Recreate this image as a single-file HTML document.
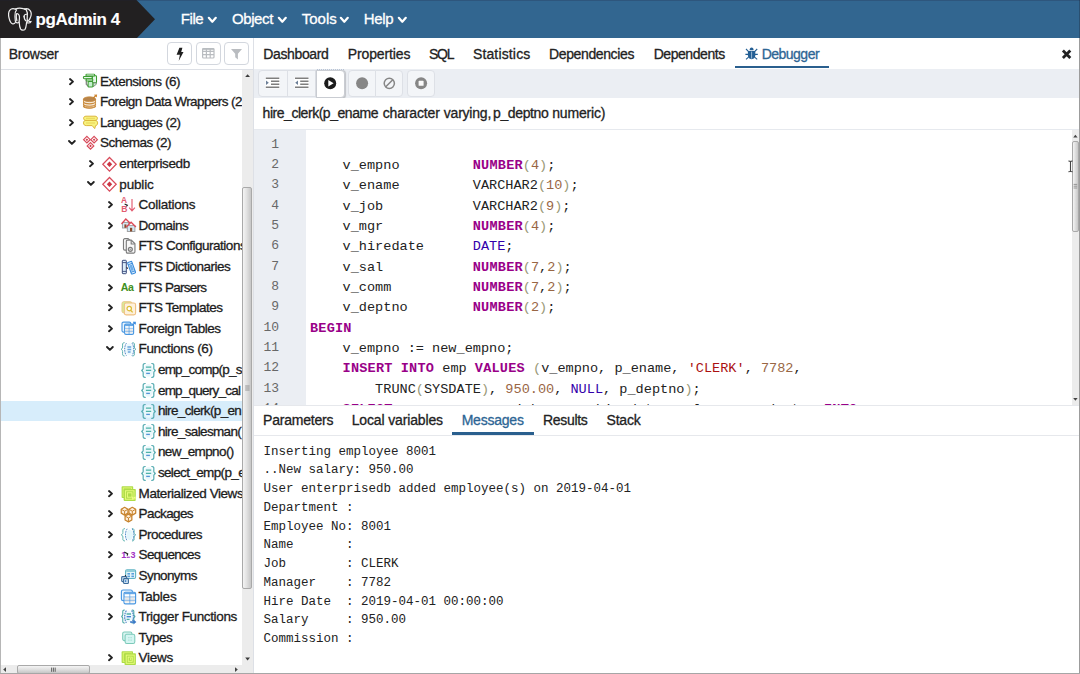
<!DOCTYPE html>
<html>
<head>
<meta charset="utf-8">
<title>pgAdmin 4</title>
<style>
*{box-sizing:border-box;margin:0;padding:0}
html,body{width:1080px;height:674px;overflow:hidden;background:#fff}
body{font-family:"Liberation Sans",sans-serif;font-size:14px;color:#222;position:relative}
.t{position:absolute;white-space:nowrap;-webkit-text-stroke:0.3px}
svg{position:absolute;overflow:visible}
#hdr{position:absolute;left:0;top:0;width:1080px;height:38.5px;background:#326690}
.menu{position:absolute;top:10px;color:#fff;font-size:14.5px;white-space:nowrap;line-height:18px}
#brw{position:absolute;left:0;top:38px;width:253px;height:636px;background:#fff;border-left:1px solid #b6b6b6;overflow:hidden}
#brwtitle{position:absolute;left:0;top:0;width:253px;height:32px;border-bottom:1px solid #dde0e6;background:#fff}
.bbtn{position:absolute;top:4.2px;height:22.8px;width:24.5px;border:1px solid #d3d7de;border-radius:4px;background:#fff}
#vline{position:absolute;left:253px;top:38px;width:1px;height:636px;background:#dde0e6}
#tabs{position:absolute;left:254px;top:38px;width:826px;height:31px;background:#fff}
.tab{position:absolute;top:8px;font-size:14px;line-height:16px;white-space:nowrap;color:#222}
#toolbar{position:absolute;left:254px;top:69px;width:826px;height:29.2px;background:#ebeef3}
.tbtn{position:absolute;top:1.2px;height:27px;border:1px solid #dde0e6;background:#f3f5f8}
#ftitle{position:absolute;left:254px;top:98.2px;width:826px;height:31.8px;background:#fff;border-bottom:1px solid #e6e9ee}
#editor{position:absolute;left:254px;top:130px;width:818px;height:274.5px;background:#fff;overflow:hidden}
#gutter{position:absolute;left:0;top:0;width:52px;height:275px;background:#ebeef3}
.ln{position:absolute;left:0;width:25px;text-align:right;font-family:"Liberation Mono",monospace;font-size:13px;line-height:20px;color:#686868;white-space:pre}
.cl{position:absolute;left:56px;font-family:"Liberation Mono",monospace;font-size:13.57px;line-height:20px;color:#222;white-space:pre}
.k{color:#908;font-weight:bold;letter-spacing:0.2px}.b{color:#30a}.n{color:#964}.s{color:#a11}.p{color:#997}
#btabs{position:absolute;left:254px;top:404.5px;width:826px;height:31.5px;background:#fff;border-top:1px solid #e6e8ec;border-bottom:1px solid #e6e8ec}
#msgs{position:absolute;left:254px;top:436px;width:826px;height:238px;background:#fff}
.ml{position:absolute;left:9.5px;font-family:"Liberation Mono",monospace;font-size:12.5px;line-height:18px;color:#222;white-space:pre}
.row{position:absolute;left:0;width:242px;height:20.6px}
.lbl{position:absolute;white-space:nowrap;font-size:13.5px;line-height:18px;color:#1c1c1c;-webkit-text-stroke:0.3px}

</style>
</head>
<body>
<div id="hdr">
<svg style="left:0;top:0" width="160" height="38.5" viewBox="0 0 160 38.5"><polygon points="0,0 136.5,0 155,19.2 136.5,38.5 0,38.5" fill="#222021"/></svg>
<svg style="left:7.5px;top:8.4px" width="23.6" height="22.8" viewBox="0 0 24 24" preserveAspectRatio="none" fill="none" stroke="#efefef" stroke-width="1.25" stroke-linecap="round" stroke-linejoin="round">
<path d="M7.6,1.2 C5.5,0.3 3.2,0.6 1.9,2.2 C0.2,4.3 0.4,7.6 1.1,10.6 C1.7,13.2 2.9,15.9 4.4,16.6 C5.6,17.1 6.8,16.4 7.5,15.3"/>
<path d="M8.7,1.9 C7.2,3.6 6.9,6 7.1,8.6 C7.3,11 7.2,13.4 7.7,14.6 C8.3,15.9 10.3,16 11.2,14.8"/>
<path d="M7.6,1.2 C9.5,0.2 13,0 15.6,0.7 C17,1 18,1.5 18.6,2"/>
<path d="M8.4,6.2 C9.6,5.4 11,6.3 11.5,8.2 C12,10.2 11.6,12.6 11.3,14.6 C11.5,17.5 12,20.6 12.9,22.2 C13.8,23.7 16.2,23.7 17.3,22.4 C18.4,21 18.5,17.8 18.9,15.5"/>
<path d="M8.6,6.4 C8.2,8.4 8.4,11.2 9,13.4"/>
<path d="M16.6,1.1 C18.7,0.4 21.2,0.9 22.5,2.7 C24.2,5 23.6,8.6 22.3,11.2 C21.8,12.2 21.3,13 20.8,13.6 C21.8,14.5 23,14.4 23.5,14.2 C22.8,15.6 20.6,16 18.9,15.4"/>
<path d="M18.6,2 C19.8,4.2 19.9,6.6 19.6,8.8 C19.4,10.6 19.4,12.4 19.9,13.8"/>
<path d="M16.1,9.3 C16.3,7.7 17.4,6.4 19,6.6"/>
<path d="M16.6,9 C16.4,11.4 17.8,13.6 19.6,14.2"/>
</svg>
<div class="t" style="left:35.6px;top:9.5px;font-size:17px;line-height:20px;color:#fff;font-weight:bold;letter-spacing:-0.393px;-webkit-text-stroke:0.1px">pgAdmin 4</div>
<div class="t" style="left:180.8px;top:10px;font-size:15px;line-height:18px;color:#fff;font-weight:normal;letter-spacing:-0.424px;">File</div><svg style="left:208.3px;top:17.2px" width="8.6" height="5.8" viewBox="0 0 8.6 5.8"><polyline points="0.8,0.8 4.3,4.8 7.8,0.8" fill="none" stroke="#fff" stroke-width="2.2" stroke-linecap="round" stroke-linejoin="round"/></svg>
<div class="t" style="left:231.9px;top:10px;font-size:15px;line-height:18px;color:#fff;font-weight:normal;letter-spacing:-0.372px;">Object</div><svg style="left:277.5px;top:17.2px" width="8.6" height="5.8" viewBox="0 0 8.6 5.8"><polyline points="0.8,0.8 4.3,4.8 7.8,0.8" fill="none" stroke="#fff" stroke-width="2.2" stroke-linecap="round" stroke-linejoin="round"/></svg>
<div class="t" style="left:301.7px;top:10px;font-size:15px;line-height:18px;color:#fff;font-weight:normal;letter-spacing:0.042px;">Tools</div><svg style="left:340.3px;top:17.2px" width="8.6" height="5.8" viewBox="0 0 8.6 5.8"><polyline points="0.8,0.8 4.3,4.8 7.8,0.8" fill="none" stroke="#fff" stroke-width="2.2" stroke-linecap="round" stroke-linejoin="round"/></svg>
<div class="t" style="left:363.8px;top:10px;font-size:15px;line-height:18px;color:#fff;font-weight:normal;letter-spacing:-0.353px;">Help</div><svg style="left:398px;top:17.2px" width="8.6" height="5.8" viewBox="0 0 8.6 5.8"><polyline points="0.8,0.8 4.3,4.8 7.8,0.8" fill="none" stroke="#fff" stroke-width="2.2" stroke-linecap="round" stroke-linejoin="round"/></svg>
</div>
<div id="brw">
<div id="brwtitle"><div class="t" style="left:7.7px;top:8px;font-size:14px;line-height:16px;color:#222;font-weight:normal;letter-spacing:-0.227px;">Browser</div>
<div class="bbtn" style="left:166px"></div><div class="bbtn" style="left:195px"></div><div class="bbtn" style="left:223.2px;width:24.6px"></div>
<svg style="left:0;top:0" width="253" height="32" viewBox="1 38 253 32">
<polygon points="179.4,47.7 182.4,47.7 181.2,52.1 183.5,52.1 178.7,61 179.9,54.7 176.6,54.7" fill="#1e1e1e"/>
<g fill="none" stroke="#b9bcc0" stroke-width="1.2"><rect x="202.6" y="48.6" width="11.4" height="9.4" rx="1"/><path d="M202.6,51.4 H214 M202.6,54.6 H214 M206.4,48.6 V58 M210.2,48.6 V58"/></g>
<rect x="202.4" y="48.2" width="11.8" height="1.6" fill="#b9bcc0"/>
<path d="M231,49 H242 L237.9,53.8 V59.4 L235.2,57.2 V53.8 Z" fill="#b9bcc0"/>
</svg>
</div>
<div id="tree" style="position:absolute;left:0;top:0;width:241px;height:636px;overflow:hidden">
<svg style="left:68.2px;top:39.5px" width="6" height="8" viewBox="0 0 6 8"><polyline points="1,1 4,3.6 1,6.2" fill="none" stroke="#222" stroke-width="1.9" stroke-linecap="round" stroke-linejoin="round"/></svg>
<svg style="left:81.8px;top:35.1px" width="16" height="16" viewBox="0 0 16 16"><g transform="scale(0.98,0.94)" fill="#e2f7e6" stroke="#3c9c30" stroke-width="1.05" stroke-linejoin="round">
<path d="M3.4,6.6 V12 L6,14.6" fill="none" stroke="#8a8a8a" stroke-width="1.4"/>
<rect x="9.6" y="3" width="4.2" height="7.4" rx="0.8"/>
<path d="M10.2,10.6 L13.6,10.6 L13.6,12 L10.4,14.6 Z" fill="#cfe9d4" stroke="#6f8f72" stroke-width="0.9"/>
<rect x="3" y="1.2" width="9" height="2.1" rx="0.9"/>
<rect x="0.4" y="3.8" width="9" height="2.2" rx="0.9"/>
<rect x="3.2" y="6.5" width="6.8" height="2.1" rx="0.8"/>
<rect x="5.2" y="9.1" width="4.8" height="5.8" rx="0.9" fill="#c4efcf"/>
</g></svg>
<div class="lbl" style="left:99.0px;top:34.6px;letter-spacing:-0.446px">Extensions (6)</div>
<svg style="left:68.2px;top:60.1px" width="6" height="8" viewBox="0 0 6 8"><polyline points="1,1 4,3.6 1,6.2" fill="none" stroke="#222" stroke-width="1.9" stroke-linecap="round" stroke-linejoin="round"/></svg>
<svg style="left:81.8px;top:55.7px" width="16" height="16" viewBox="0 0 16 16"><g transform="scale(0.98,0.95)">
<path d="M0.5,5.6 V12 C0.5,13.6 3.3,14.7 6.6,14.7 C9.9,14.7 12.8,13.6 12.8,12 V5.6 Z" fill="#f7ead8" stroke="#c98a3c" stroke-width="0.9"/>
<path d="M0.5,8 C0.5,9.5 3.3,10.4 6.6,10.4 C9.9,10.4 12.8,9.5 12.8,8" fill="none" stroke="#c98a3c" stroke-width="1.2"/>
<path d="M0.5,10.5 C0.5,12 3.3,12.9 6.6,12.9 C9.9,12.9 12.8,12 12.8,10.5" fill="none" stroke="#c98a3c" stroke-width="1.2"/>
<path d="M0.5,12.6 C0.5,13.8 3.3,14.8 6.6,14.8 C9.9,14.8 12.8,13.8 12.8,12.6" fill="none" stroke="#c98a3c" stroke-width="1.2"/>
<ellipse cx="6.65" cy="5.5" rx="6.3" ry="2.5" fill="#b8844a" stroke="#c98a3c" stroke-width="0.8"/>
<path d="M10.2,4.4 L13.4,1.4" stroke="#c8802c" stroke-width="1.3" fill="none"/>
<path d="M11,0.7 L14.4,0.5 L14.1,3.8 Z" fill="#d08632"/>
</g></svg>
<div class="lbl" style="left:99.0px;top:55.2px;letter-spacing:-0.579px">Foreign Data Wrappers (2</div>
<svg style="left:68.2px;top:80.7px" width="6" height="8" viewBox="0 0 6 8"><polyline points="1,1 4,3.6 1,6.2" fill="none" stroke="#222" stroke-width="1.9" stroke-linecap="round" stroke-linejoin="round"/></svg>
<svg style="left:81.8px;top:76.3px" width="16" height="16" viewBox="0 0 16 16"><g fill="#f7f37e" stroke="#dcb63c" stroke-width="1" stroke-linejoin="round">
<path d="M3,6.4 C1.2,6.4 0.5,7.4 0.5,8.9 C0.5,10.6 1.6,11.6 3.2,11.6 H9.2 L11.7,14.6 L12.6,11.6 C14,11.4 14.6,10.4 14.6,8.9 C14.6,7.4 13.8,6.4 12,6.4 Z"/>
<path d="M3,2.2 H12 C13.6,2.2 14.4,3.1 14.4,4.3 C14.4,5.5 13.6,6.4 12,6.4 H3 C1.4,6.4 0.6,5.5 0.6,4.3 C0.6,3.1 1.4,2.2 3,2.2 Z"/>
<path d="M3,4.3 H12 M3,9 H12" stroke="#e8cf54" stroke-width="0.9" fill="none"/>
</g></svg>
<div class="lbl" style="left:99.0px;top:75.8px;letter-spacing:-0.515px">Languages (2)</div>
<svg style="left:66.8px;top:102.2px" width="8" height="6" viewBox="0 0 8 6"><polyline points="1,1 3.9,3.9 6.8,1" fill="none" stroke="#222" stroke-width="1.9" stroke-linecap="round" stroke-linejoin="round"/></svg>
<svg style="left:81.8px;top:96.9px" width="16" height="16" viewBox="0 0 16 16"><path d="M3.9,1.4000000000000004 L7.199999999999999,4.7 L3.9,8.0 L0.6000000000000001,4.7 Z" fill="#fff" stroke="#d84a5a" stroke-width="1.2"/><path d="M3.9,3.4000000000000004 L5.2,4.7 L3.9,6.0 L2.5999999999999996,4.7 Z" fill="#cf3a48"/><path d="M11.1,1.4000000000000004 L14.399999999999999,4.7 L11.1,8.0 L7.8,4.7 Z" fill="#fff" stroke="#d84a5a" stroke-width="1.2"/><path d="M11.1,3.4000000000000004 L12.4,4.7 L11.1,6.0 L9.799999999999999,4.7 Z" fill="#cf3a48"/><path d="M7.5,7.6000000000000005 L10.8,10.9 L7.5,14.2 L4.2,10.9 Z" fill="#fff" stroke="#d84a5a" stroke-width="1.2"/><path d="M7.5,9.6 L8.8,10.9 L7.5,12.200000000000001 L6.2,10.9 Z" fill="#cf3a48"/></svg>
<div class="lbl" style="left:99.0px;top:96.4px;letter-spacing:-0.513px">Schemas (2)</div>
<svg style="left:87.5px;top:121.9px" width="6" height="8" viewBox="0 0 6 8"><polyline points="1,1 4,3.6 1,6.2" fill="none" stroke="#222" stroke-width="1.9" stroke-linecap="round" stroke-linejoin="round"/></svg>
<svg style="left:101.1px;top:117.5px" width="16" height="16" viewBox="0 0 16 16"><path d="M7.5,1.5 L14.2,8.3 L7.5,15.1 L0.8,8.3 Z" fill="#fff" stroke="#d84a5a" stroke-width="1.25"/><path d="M7.5,5.6 L10.2,8.3 L7.5,11 L4.8,8.3 Z" fill="#cb3644"/></svg>
<div class="lbl" style="left:118.3px;top:117.0px;letter-spacing:-0.378px">enterprisedb</div>
<svg style="left:86.1px;top:143.4px" width="8" height="6" viewBox="0 0 8 6"><polyline points="1,1 3.9,3.9 6.8,1" fill="none" stroke="#222" stroke-width="1.9" stroke-linecap="round" stroke-linejoin="round"/></svg>
<svg style="left:101.1px;top:138.1px" width="16" height="16" viewBox="0 0 16 16"><path d="M7.5,1.5 L14.2,8.3 L7.5,15.1 L0.8,8.3 Z" fill="#fff" stroke="#d84a5a" stroke-width="1.25"/><path d="M7.5,5.6 L10.2,8.3 L7.5,11 L4.8,8.3 Z" fill="#cb3644"/></svg>
<div class="lbl" style="left:118.3px;top:137.6px;letter-spacing:-0.156px">public</div>
<svg style="left:106.8px;top:163.1px" width="6" height="8" viewBox="0 0 6 8"><polyline points="1,1 4,3.6 1,6.2" fill="none" stroke="#222" stroke-width="1.9" stroke-linecap="round" stroke-linejoin="round"/></svg>
<svg style="left:120.4px;top:158.7px" width="16" height="16" viewBox="0 0 16 16"><g fill="#e25c70" font-family="Liberation Sans, sans-serif" font-weight="bold">
<text x="0" y="6.4" font-size="8.4">A</text><text x="0.2" y="15" font-size="8.6">B</text>
<path d="M11,2 V13.6 M8.2,10.7 L11,13.9 L13.9,10.7" fill="none" stroke="#e25c70" stroke-width="1.15"/>
<path d="M3.6,7 L6.3,8.2 L5.4,9.3" fill="none" stroke="#222" stroke-width="1.2"/>
</g></svg>
<div class="lbl" style="left:137.6px;top:158.2px;letter-spacing:-0.276px">Collations</div>
<svg style="left:106.8px;top:183.7px" width="6" height="8" viewBox="0 0 6 8"><polyline points="1,1 4,3.6 1,6.2" fill="none" stroke="#222" stroke-width="1.9" stroke-linecap="round" stroke-linejoin="round"/></svg>
<svg style="left:120.4px;top:179.3px" width="16" height="16" viewBox="0 0 16 16"><g>
<rect x="1.4" y="5.4" width="6.2" height="5.6" fill="#d3e6f2" stroke="#9a9a9a" stroke-width="0.9"/>
<rect x="3.4" y="7.4" width="2" height="3.4" fill="#8a4a2a"/>
<path d="M0.5,7 L4.8,2 L9,6" fill="none" stroke="#dc4a58" stroke-width="1.3"/>
<rect x="6.3" y="8.6" width="7.6" height="5.9" fill="#d3e6f2" stroke="#9a9a9a" stroke-width="0.9"/>
<rect x="9" y="10.8" width="2.2" height="3.6" fill="#8a4a2a"/>
<path d="M5.3,10 L10.1,5.2 L14.9,10" fill="none" stroke="#dc4a58" stroke-width="1.3"/>
</g></svg>
<div class="lbl" style="left:137.6px;top:178.8px;letter-spacing:-0.514px">Domains</div>
<svg style="left:106.8px;top:204.3px" width="6" height="8" viewBox="0 0 6 8"><polyline points="1,1 4,3.6 1,6.2" fill="none" stroke="#222" stroke-width="1.9" stroke-linecap="round" stroke-linejoin="round"/></svg>
<svg style="left:120.4px;top:199.9px" width="16" height="16" viewBox="0 0 16 16"><g transform="translate(0.6,0) scale(0.94,0.96)" fill="#f7f7f7" stroke="#7c7c7c" stroke-width="1.2" stroke-linejoin="round">
<path d="M3.4,0.7 H7 L9,2.6 V12.6 H3.4 C2.6,12.6 2,12 2,11.2 V2 C2,1.3 2.6,0.7 3.4,0.7 Z"/>
<path d="M6.2,2.2 H10.4 L14.2,6 V14.4 C14.2,15.2 13.7,15.7 13,15.7 H6.2 C5.5,15.7 5,15.2 5,14.4 V3.4 C5,2.7 5.5,2.2 6.2,2.2 Z"/>
<path d="M10.2,2.4 V6.2 H14" fill="none"/>
<circle cx="9.3" cy="11.8" r="2.1" fill="#e4e4e4" stroke-width="1.3"/>
<circle cx="9.3" cy="11.8" r="0.7" fill="#8c8c8c" stroke="none"/>
</g></svg>
<div class="lbl" style="left:137.6px;top:199.4px;letter-spacing:-0.485px">FTS Configurations</div>
<svg style="left:106.8px;top:224.9px" width="6" height="8" viewBox="0 0 6 8"><polyline points="1,1 4,3.6 1,6.2" fill="none" stroke="#222" stroke-width="1.9" stroke-linecap="round" stroke-linejoin="round"/></svg>
<svg style="left:120.4px;top:220.5px" width="16" height="16" viewBox="0 0 16 16"><g stroke-linejoin="round">
<rect x="1.3" y="1.3" width="4" height="13.4" rx="0.7" fill="#dceefa" stroke="#3c4c7c" stroke-width="1"/>
<path d="M1.3,3.6 H5.3 M1.3,12.4 H5.3" stroke="#3c4c7c" stroke-width="0.9"/>
<g transform="rotate(-20 10.6 8.8)"><rect x="8.4" y="2.6" width="4.4" height="12.2" rx="0.7" fill="#e4f1fc" stroke="#3a8cdc" stroke-width="1.1"/>
<path d="M8.4,4.8 H12.8 M8.4,12.8 H12.8" stroke="#3a8cdc" stroke-width="0.9"/><rect x="9.3" y="5.8" width="2.6" height="6" fill="#58a2e6" opacity="0.85"/></g>
<path d="M5.6,8.4 L6.8,9.6" stroke="#222" stroke-width="1.1"/>
</g></svg>
<div class="lbl" style="left:137.6px;top:220.0px;letter-spacing:-0.512px">FTS Dictionaries</div>
<svg style="left:106.8px;top:245.5px" width="6" height="8" viewBox="0 0 6 8"><polyline points="1,1 4,3.6 1,6.2" fill="none" stroke="#222" stroke-width="1.9" stroke-linecap="round" stroke-linejoin="round"/></svg>
<svg style="left:120.4px;top:241.1px" width="16" height="16" viewBox="0 0 16 16"><text x="-0.3" y="12.1" font-family="Liberation Sans, sans-serif" font-weight="bold" font-size="10.6" fill="#3f8f22" letter-spacing="-0.3">Aa</text></svg>
<div class="lbl" style="left:137.6px;top:240.6px;letter-spacing:-0.737px">FTS Parsers</div>
<svg style="left:106.8px;top:266.1px" width="6" height="8" viewBox="0 0 6 8"><polyline points="1,1 4,3.6 1,6.2" fill="none" stroke="#222" stroke-width="1.9" stroke-linecap="round" stroke-linejoin="round"/></svg>
<svg style="left:120.4px;top:261.7px" width="16" height="16" viewBox="0 0 16 16"><g stroke-linejoin="round">
<rect x="1" y="1.7" width="10" height="11.2" rx="1.8" fill="#d4f09a" stroke="#ecc488" stroke-width="1"/>
<rect x="3.3" y="3" width="11.3" height="11.9" rx="1.8" fill="#fdf1dd" stroke="#f0c080" stroke-width="1.1"/>
<circle cx="8.2" cy="8.6" r="2.2" fill="#fff" stroke="#dcbc34" stroke-width="1.2"/>
<path d="M9.8,10.4 L11.6,12.4" stroke="#dcbc34" stroke-width="1.3"/>
</g></svg>
<div class="lbl" style="left:137.6px;top:261.2px;letter-spacing:-0.512px">FTS Templates</div>
<svg style="left:106.8px;top:286.7px" width="6" height="8" viewBox="0 0 6 8"><polyline points="1,1 4,3.6 1,6.2" fill="none" stroke="#222" stroke-width="1.9" stroke-linecap="round" stroke-linejoin="round"/></svg>
<svg style="left:120.4px;top:282.3px" width="16" height="16" viewBox="0 0 16 16"><rect x="1" y="2.1" width="8.8" height="10" rx="1.5" fill="#eaf4fd" stroke="#4a98e2" stroke-width="1.15"/><rect x="3.6" y="4.1" width="9" height="10.2" rx="1.4" fill="#fff" stroke="#4a98e2" stroke-width="1.15"/><rect x="4.1" y="4.5" width="8" height="1.6" fill="#4a98e2" opacity="0.85"/><rect x="4.4" y="8.5" width="7.4" height="4.4" fill="#e9e9e9"/><path d="M3.6,8.3 H12.6 M3.6,11.3 H12.6" stroke="#4a98e2" stroke-width="0.8" opacity="0.7"/><path d="M8.1,5.5 V14.299999999999999" stroke="#4a98e2" stroke-width="0.9" opacity="0.75"/><path d="M11.6,4.9 L14,2.5 M12,2.2 H14.3 V4.6" fill="none" stroke="#3f8ee0" stroke-width="1.1"/></svg>
<div class="lbl" style="left:137.6px;top:281.8px;letter-spacing:-0.447px">Foreign Tables</div>
<svg style="left:105.4px;top:308.2px" width="8" height="6" viewBox="0 0 8 6"><polyline points="1,1 3.9,3.9 6.8,1" fill="none" stroke="#222" stroke-width="1.9" stroke-linecap="round" stroke-linejoin="round"/></svg>
<svg style="left:120.4px;top:302.9px" width="16" height="16" viewBox="0 0 16 16"><ellipse cx="8.2" cy="8.3" rx="4" ry="6" fill="#ecf9fd"/><path d="M3.2,1.6 C1.1199999999999999,1.6 1.6,3.2 1.6,6.1000000000000005 C1.6,7.700000000000001 0.2,8.3 0,8.3 C0.2,8.3 1.6,8.9 1.6,10.5 C1.6,13.4 1.1199999999999999,15 3.2,15" fill="none" stroke="#58b0ae" stroke-width="1" stroke-linecap="round"/><path d="M11.8,1.6 C13.88,1.6 13.4,3.2 13.4,6.1000000000000005 C13.4,7.700000000000001 14.8,8.3 15,8.3 C14.8,8.3 13.4,8.9 13.4,10.5 C13.4,13.4 13.88,15 11.8,15" fill="none" stroke="#58b0ae" stroke-width="1" stroke-linecap="round"/><path d="M5.4,2.2 C3.1,5.2 3.1,11.6 5.4,14.6" fill="none" stroke="#4a84c4" stroke-width="1" stroke-dasharray="1.6 0.8"/><path d="M11.0,2.2 C13.3,5.2 13.3,11.6 11.0,14.6" fill="none" stroke="#4a84c4" stroke-width="1" stroke-dasharray="1.6 0.8"/><path d="M6.4,6 H10.2 M6.4,8.5 H10.2" stroke="#6aa4dc" stroke-width="1.3"/><path d="M6.8,11 H9.6" stroke="#3f86d0" stroke-width="1.1"/></svg>
<div class="lbl" style="left:137.6px;top:302.4px;letter-spacing:-0.373px">Functions (6)</div>
<svg style="left:139.7px;top:323.5px" width="16" height="16" viewBox="0 0 16 16"><ellipse cx="7.5" cy="8.4" rx="4.6" ry="6.4" fill="#e9f8fc"/><path d="M4.2,1.5 C1.5999999999999999,1.5 2.2,3.1 2.2,6.249999999999999 C2.2,7.85 0.4,8.45 0.2,8.45 C0.4,8.45 2.2,9.049999999999999 2.2,10.649999999999999 C2.2,13.8 1.5999999999999999,15.4 4.2,15.4" fill="none" stroke="#52aab0" stroke-width="1.2" stroke-linecap="round"/><path d="M10.8,1.5 C13.4,1.5 12.8,3.1 12.8,6.249999999999999 C12.8,7.85 14.600000000000001,8.45 14.8,8.45 C14.600000000000001,8.45 12.8,9.049999999999999 12.8,10.649999999999999 C12.8,13.8 13.4,15.4 10.8,15.4" fill="none" stroke="#52aab0" stroke-width="1.2" stroke-linecap="round"/><path d="M4.9,5.2 H10.2 M4.9,8.3 H10.2" stroke="#4eb2a8" stroke-width="1.3"/><path d="M5.2,11.4 H8.9" stroke="#5494d6" stroke-width="1.3"/></svg>
<div class="lbl" style="left:156.9px;top:323.0px;letter-spacing:-0.76px">emp_comp(p_s</div>
<svg style="left:139.7px;top:344.1px" width="16" height="16" viewBox="0 0 16 16"><ellipse cx="7.5" cy="8.4" rx="4.6" ry="6.4" fill="#e9f8fc"/><path d="M4.2,1.5 C1.5999999999999999,1.5 2.2,3.1 2.2,6.249999999999999 C2.2,7.85 0.4,8.45 0.2,8.45 C0.4,8.45 2.2,9.049999999999999 2.2,10.649999999999999 C2.2,13.8 1.5999999999999999,15.4 4.2,15.4" fill="none" stroke="#52aab0" stroke-width="1.2" stroke-linecap="round"/><path d="M10.8,1.5 C13.4,1.5 12.8,3.1 12.8,6.249999999999999 C12.8,7.85 14.600000000000001,8.45 14.8,8.45 C14.600000000000001,8.45 12.8,9.049999999999999 12.8,10.649999999999999 C12.8,13.8 13.4,15.4 10.8,15.4" fill="none" stroke="#52aab0" stroke-width="1.2" stroke-linecap="round"/><path d="M4.9,5.2 H10.2 M4.9,8.3 H10.2" stroke="#4eb2a8" stroke-width="1.3"/><path d="M5.2,11.4 H8.9" stroke="#5494d6" stroke-width="1.3"/></svg>
<div class="lbl" style="left:156.9px;top:343.6px;letter-spacing:-0.768px">emp_query_cal</div>
<div style="position:absolute;left:0;top:363.0px;width:242px;height:20.3px;background:#d7edfb"></div>
<svg style="left:139.7px;top:364.7px" width="16" height="16" viewBox="0 0 16 16"><ellipse cx="7.5" cy="8.4" rx="4.6" ry="6.4" fill="#e9f8fc"/><path d="M4.2,1.5 C1.5999999999999999,1.5 2.2,3.1 2.2,6.249999999999999 C2.2,7.85 0.4,8.45 0.2,8.45 C0.4,8.45 2.2,9.049999999999999 2.2,10.649999999999999 C2.2,13.8 1.5999999999999999,15.4 4.2,15.4" fill="none" stroke="#52aab0" stroke-width="1.2" stroke-linecap="round"/><path d="M10.8,1.5 C13.4,1.5 12.8,3.1 12.8,6.249999999999999 C12.8,7.85 14.600000000000001,8.45 14.8,8.45 C14.600000000000001,8.45 12.8,9.049999999999999 12.8,10.649999999999999 C12.8,13.8 13.4,15.4 10.8,15.4" fill="none" stroke="#52aab0" stroke-width="1.2" stroke-linecap="round"/><path d="M4.9,5.2 H10.2 M4.9,8.3 H10.2" stroke="#4eb2a8" stroke-width="1.3"/><path d="M5.2,11.4 H8.9" stroke="#5494d6" stroke-width="1.3"/></svg>
<div class="lbl" style="left:156.9px;top:364.2px;letter-spacing:-0.647px">hire_clerk(p_en</div>
<svg style="left:139.7px;top:385.3px" width="16" height="16" viewBox="0 0 16 16"><ellipse cx="7.5" cy="8.4" rx="4.6" ry="6.4" fill="#e9f8fc"/><path d="M4.2,1.5 C1.5999999999999999,1.5 2.2,3.1 2.2,6.249999999999999 C2.2,7.85 0.4,8.45 0.2,8.45 C0.4,8.45 2.2,9.049999999999999 2.2,10.649999999999999 C2.2,13.8 1.5999999999999999,15.4 4.2,15.4" fill="none" stroke="#52aab0" stroke-width="1.2" stroke-linecap="round"/><path d="M10.8,1.5 C13.4,1.5 12.8,3.1 12.8,6.249999999999999 C12.8,7.85 14.600000000000001,8.45 14.8,8.45 C14.600000000000001,8.45 12.8,9.049999999999999 12.8,10.649999999999999 C12.8,13.8 13.4,15.4 10.8,15.4" fill="none" stroke="#52aab0" stroke-width="1.2" stroke-linecap="round"/><path d="M4.9,5.2 H10.2 M4.9,8.3 H10.2" stroke="#4eb2a8" stroke-width="1.3"/><path d="M5.2,11.4 H8.9" stroke="#5494d6" stroke-width="1.3"/></svg>
<div class="lbl" style="left:156.9px;top:384.8px;letter-spacing:-0.641px">hire_salesman(</div>
<svg style="left:139.7px;top:405.9px" width="16" height="16" viewBox="0 0 16 16"><ellipse cx="7.5" cy="8.4" rx="4.6" ry="6.4" fill="#e9f8fc"/><path d="M4.2,1.5 C1.5999999999999999,1.5 2.2,3.1 2.2,6.249999999999999 C2.2,7.85 0.4,8.45 0.2,8.45 C0.4,8.45 2.2,9.049999999999999 2.2,10.649999999999999 C2.2,13.8 1.5999999999999999,15.4 4.2,15.4" fill="none" stroke="#52aab0" stroke-width="1.2" stroke-linecap="round"/><path d="M10.8,1.5 C13.4,1.5 12.8,3.1 12.8,6.249999999999999 C12.8,7.85 14.600000000000001,8.45 14.8,8.45 C14.600000000000001,8.45 12.8,9.049999999999999 12.8,10.649999999999999 C12.8,13.8 13.4,15.4 10.8,15.4" fill="none" stroke="#52aab0" stroke-width="1.2" stroke-linecap="round"/><path d="M4.9,5.2 H10.2 M4.9,8.3 H10.2" stroke="#4eb2a8" stroke-width="1.3"/><path d="M5.2,11.4 H8.9" stroke="#5494d6" stroke-width="1.3"/></svg>
<div class="lbl" style="left:156.9px;top:405.4px;letter-spacing:-0.615px">new_empno()</div>
<svg style="left:139.7px;top:426.5px" width="16" height="16" viewBox="0 0 16 16"><ellipse cx="7.5" cy="8.4" rx="4.6" ry="6.4" fill="#e9f8fc"/><path d="M4.2,1.5 C1.5999999999999999,1.5 2.2,3.1 2.2,6.249999999999999 C2.2,7.85 0.4,8.45 0.2,8.45 C0.4,8.45 2.2,9.049999999999999 2.2,10.649999999999999 C2.2,13.8 1.5999999999999999,15.4 4.2,15.4" fill="none" stroke="#52aab0" stroke-width="1.2" stroke-linecap="round"/><path d="M10.8,1.5 C13.4,1.5 12.8,3.1 12.8,6.249999999999999 C12.8,7.85 14.600000000000001,8.45 14.8,8.45 C14.600000000000001,8.45 12.8,9.049999999999999 12.8,10.649999999999999 C12.8,13.8 13.4,15.4 10.8,15.4" fill="none" stroke="#52aab0" stroke-width="1.2" stroke-linecap="round"/><path d="M4.9,5.2 H10.2 M4.9,8.3 H10.2" stroke="#4eb2a8" stroke-width="1.3"/><path d="M5.2,11.4 H8.9" stroke="#5494d6" stroke-width="1.3"/></svg>
<div class="lbl" style="left:156.9px;top:426.0px;letter-spacing:-0.639px">select_emp(p_e</div>
<svg style="left:106.8px;top:451.5px" width="6" height="8" viewBox="0 0 6 8"><polyline points="1,1 4,3.6 1,6.2" fill="none" stroke="#222" stroke-width="1.9" stroke-linecap="round" stroke-linejoin="round"/></svg>
<svg style="left:120.4px;top:447.1px" width="16" height="16" viewBox="0 0 16 16"><rect x="0.6" y="1.2" width="11.6" height="11.8" rx="0.8" fill="#aedc48"/>
<rect x="2.2" y="2.9" width="8.4" height="8.4" fill="none" stroke="#e6fa78" stroke-width="0.9"/>
<rect x="2.6" y="3.9" width="12.2" height="12" rx="0.8" fill="#aedc48"/>
<rect x="4.4" y="5.8" width="8.6" height="8.4" fill="none" stroke="#eeff80" stroke-width="0.9"/>
<rect x="6.4" y="7.8" width="4.6" height="4.4" fill="none" stroke="#eeff80" stroke-width="0.9"/>
<path d="M11.4,14.6 V11.8 L12.8,13.4 L14.2,11.8 V14.6" fill="none" stroke="#f4ff8c" stroke-width="0.9"/></svg>
<div class="lbl" style="left:137.6px;top:446.6px;letter-spacing:-0.423px">Materialized Views</div>
<svg style="left:106.8px;top:472.1px" width="6" height="8" viewBox="0 0 6 8"><polyline points="1,1 4,3.6 1,6.2" fill="none" stroke="#222" stroke-width="1.9" stroke-linecap="round" stroke-linejoin="round"/></svg>
<svg style="left:120.4px;top:467.7px" width="16" height="16" viewBox="0 0 16 16"><polygon points="3.60,1.30 6.98,3.25 6.98,7.15 3.60,9.10 0.22,7.15 0.22,3.25" fill="#fdeedb" stroke="#c8842e" stroke-width="1.25" stroke-linejoin="round"/><path d="M3.6,5.2 V9.1 M3.6,5.2 L0.22,3.25 M3.6,5.2 L6.98,3.25" stroke="#c8842e" stroke-width="1" fill="none"/><polygon points="11.30,1.30 14.68,3.25 14.68,7.15 11.30,9.10 7.92,7.15 7.92,3.25" fill="#fdeedb" stroke="#c8842e" stroke-width="1.25" stroke-linejoin="round"/><path d="M11.3,5.2 V9.1 M11.3,5.2 L7.92,3.25 M11.3,5.2 L14.68,3.25" stroke="#c8842e" stroke-width="1" fill="none"/><polygon points="7.45,8.10 10.83,10.05 10.83,13.95 7.45,15.90 4.07,13.95 4.07,10.05" fill="#fdeedb" stroke="#c8842e" stroke-width="1.25" stroke-linejoin="round"/><path d="M7.45,12 V15.9 M7.45,12 L4.07,10.05 M7.45,12 L10.83,10.05" stroke="#c8842e" stroke-width="1" fill="none"/></svg>
<div class="lbl" style="left:137.6px;top:467.2px;letter-spacing:-0.614px">Packages</div>
<svg style="left:106.8px;top:492.7px" width="6" height="8" viewBox="0 0 6 8"><polyline points="1,1 4,3.6 1,6.2" fill="none" stroke="#222" stroke-width="1.9" stroke-linecap="round" stroke-linejoin="round"/></svg>
<svg style="left:120.4px;top:488.3px" width="16" height="16" viewBox="0 0 16 16"><ellipse cx="8.7" cy="8.8" rx="3.3" ry="5.4" fill="#e4f6fc"/><path d="M3.6,2.6 C1.39,2.6 1.9,4.2 1.9,6.6000000000000005 C1.9,8.200000000000001 0.4,8.8 0.2,8.8 C0.4,8.8 1.9,9.4 1.9,11.0 C1.9,13.4 1.39,15 3.6,15" fill="none" stroke="#62b6b2" stroke-width="1" stroke-linecap="round"/><path d="M11.4,2.6 C13.610000000000001,2.6 13.100000000000001,4.2 13.100000000000001,6.6000000000000005 C13.100000000000001,8.200000000000001 14.600000000000001,8.8 14.8,8.8 C14.600000000000001,8.8 13.100000000000001,9.4 13.100000000000001,11.0 C13.100000000000001,13.4 13.610000000000001,15 11.4,15" fill="none" stroke="#62b6b2" stroke-width="1" stroke-linecap="round"/><path d="M6.2,2.8 C3.9000000000000004,5.8 3.9000000000000004,11.8 6.2,14.8" fill="none" stroke="#5a92cc" stroke-width="1" stroke-dasharray="1.8 0.7"/><path d="M11.2,2.8 C13.5,5.8 13.5,11.8 11.2,14.8" fill="none" stroke="#5a92cc" stroke-width="1" stroke-dasharray="1.8 0.7"/></svg>
<div class="lbl" style="left:137.6px;top:487.8px;letter-spacing:-0.572px">Procedures</div>
<svg style="left:106.8px;top:513.3px" width="6" height="8" viewBox="0 0 6 8"><polyline points="1,1 4,3.6 1,6.2" fill="none" stroke="#222" stroke-width="1.9" stroke-linecap="round" stroke-linejoin="round"/></svg>
<svg style="left:120.4px;top:508.9px" width="16" height="16" viewBox="0 0 16 16"><text x="0.3" y="10.6" font-family="Liberation Sans, sans-serif" font-weight="bold" font-size="9" fill="#a232c4">1</text><text x="5.3" y="10.6" font-family="Liberation Sans, sans-serif" font-weight="bold" font-size="9" fill="#a232c4" letter-spacing="-1">..</text><text x="9.6" y="10.6" font-family="Liberation Sans, sans-serif" font-weight="bold" font-size="9" fill="#a232c4">3</text>
<path d="M3.2,5 L6.6,6.8 L6.2,8.6" fill="none" stroke="#222" stroke-width="1.3"/></svg>
<div class="lbl" style="left:137.6px;top:508.4px;letter-spacing:-0.683px">Sequences</div>
<svg style="left:106.8px;top:533.9px" width="6" height="8" viewBox="0 0 6 8"><polyline points="1,1 4,3.6 1,6.2" fill="none" stroke="#222" stroke-width="1.9" stroke-linecap="round" stroke-linejoin="round"/></svg>
<svg style="left:120.4px;top:529.5px" width="16" height="16" viewBox="0 0 16 16"><rect x="4.6" y="1.7" width="10" height="8.8" rx="1.4" fill="#e4f4f8" stroke="#62b4c4" stroke-width="1.1"/>
<rect x="5.3" y="2.3" width="8.6" height="1.5" fill="#7cc4d0"/>
<rect x="6.4" y="5" width="2.6" height="1.6" fill="#58a0dc"/><rect x="10.4" y="5" width="2.6" height="1.6" fill="#58a0dc"/>
<rect x="6.4" y="7.6" width="2.6" height="1.6" fill="#58a0dc"/><rect x="10.4" y="7.6" width="2.6" height="1.6" fill="#58a0dc"/>
<rect x="0.7" y="8.6" width="5" height="5" rx="0.8" fill="#d4e8f6" stroke="#3c6c9c" stroke-width="1.1"/>
<rect x="2.6" y="10.6" width="4.8" height="4.9" rx="0.8" fill="#cfe4f4" stroke="#3c6c9c" stroke-width="1.1"/>
<path d="M4,12 L5.9,13.1 L4,14.2 Z" fill="#3a7cc8"/>
<path d="M4.4,7 V8.4" stroke="#222" stroke-width="1"/></svg>
<div class="lbl" style="left:137.6px;top:529.0px;letter-spacing:-0.604px">Synonyms</div>
<svg style="left:106.8px;top:554.5px" width="6" height="8" viewBox="0 0 6 8"><polyline points="1,1 4,3.6 1,6.2" fill="none" stroke="#222" stroke-width="1.9" stroke-linecap="round" stroke-linejoin="round"/></svg>
<svg style="left:120.4px;top:550.1px" width="16" height="16" viewBox="0 0 16 16"><rect x="0.4" y="2" width="11" height="10.6" rx="1.7" fill="#eef6fd" stroke="#4a98e2" stroke-width="1.15"/><rect x="3" y="4.2" width="11.6" height="11.6" rx="1.4" fill="#fff" stroke="#4a98e2" stroke-width="1.15"/><rect x="3.5" y="4.6000000000000005" width="10.6" height="1.6" fill="#4a98e2" opacity="0.85"/><rect x="3.8" y="9.066666666666668" width="10.0" height="5.333333333333334" fill="#e9e9e9"/><path d="M3,8.866666666666667 H14.6 M3,12.333333333333334 H14.6" stroke="#4a98e2" stroke-width="0.8" opacity="0.7"/><path d="M8.8,5.6 V15.8" stroke="#4a98e2" stroke-width="0.9" opacity="0.75"/></svg>
<div class="lbl" style="left:137.6px;top:549.6px;letter-spacing:-0.186px">Tables</div>
<svg style="left:106.8px;top:575.1px" width="6" height="8" viewBox="0 0 6 8"><polyline points="1,1 4,3.6 1,6.2" fill="none" stroke="#222" stroke-width="1.9" stroke-linecap="round" stroke-linejoin="round"/></svg>
<svg style="left:120.4px;top:570.7px" width="16" height="16" viewBox="0 0 16 16"><ellipse cx="7.6" cy="7.6" rx="3.8" ry="5.6" fill="#ecf9fd"/><path d="M3.4000000000000004,1 C1.3199999999999998,1 1.8,2.6 1.8,5.3 C1.8,6.9 0.4,7.5 0.2,7.5 C0.4,7.5 1.8,8.1 1.8,9.7 C1.8,12.4 1.3199999999999998,14 3.4000000000000004,14" fill="none" stroke="#4eaaa8" stroke-width="1.1" stroke-linecap="round"/><path d="M11.2,1 C13.280000000000001,1 12.8,2.6 12.8,5.3 C12.8,6.9 14.200000000000001,7.5 14.4,7.5 C14.200000000000001,7.5 12.8,8.1 12.8,9.7 C12.8,12.4 13.280000000000001,14 11.2,14" fill="none" stroke="#4eaaa8" stroke-width="1.1" stroke-linecap="round"/><path d="M5.4,1.6 C3.1,4.6 3.1,10.8 5.4,13.8" fill="none" stroke="#3f7cc0" stroke-width="1.1" stroke-dasharray="1.6 0.7"/><path d="M10.6,1.6 C12.9,4.6 12.9,10.8 10.6,13.8" fill="none" stroke="#3f7cc0" stroke-width="1.1" stroke-dasharray="1.6 0.7"/><path d="M5.6,5 H10 M5.6,10.4 H8.6" stroke="#52b0a8" stroke-width="1.3"/><path d="M5.6,7.7 H10" stroke="#3f7cd0" stroke-width="1.3"/><path d="M9,13 H13" stroke="#3a78c8" stroke-width="1.4"/><path d="M12.4,10.6 L15.4,13 L12.4,15.4 Z" fill="#3a78c8"/></svg>
<div class="lbl" style="left:137.6px;top:570.2px;letter-spacing:-0.365px">Trigger Functions</div>
<svg style="left:120.4px;top:591.3px" width="16" height="16" viewBox="0 0 16 16"><rect x="1.7" y="2.9" width="9.2" height="8.7" rx="1.6" fill="#d8f4f0" stroke="#7ccaba" stroke-width="1.05"/>
<rect x="4.1" y="5.3" width="9.7" height="9.2" rx="1.7" fill="#d4f5f2" stroke="#7ccaba" stroke-width="1.05"/>
<g fill="#8ed4c6"><rect x="7.4" y="8.2" width="1" height="1"/><rect x="9.6" y="8.2" width="1" height="1"/><rect x="7.4" y="10.6" width="1" height="1"/><rect x="9.6" y="10.6" width="1" height="1"/></g></svg>
<div class="lbl" style="left:137.6px;top:590.8px;letter-spacing:-0.458px">Types</div>
<svg style="left:106.8px;top:616.3px" width="6" height="8" viewBox="0 0 6 8"><polyline points="1,1 4,3.6 1,6.2" fill="none" stroke="#222" stroke-width="1.9" stroke-linecap="round" stroke-linejoin="round"/></svg>
<svg style="left:120.4px;top:611.9px" width="16" height="16" viewBox="0 0 16 16"><rect x="0.6" y="1.3" width="11.4" height="11.7" rx="0.8" fill="#aedc48"/>
<rect x="2.2" y="2.9" width="8.2" height="8.4" fill="none" stroke="#e6fa78" stroke-width="0.9"/>
<rect x="3.5" y="3.3" width="11.4" height="11.8" rx="0.8" fill="#aedc48"/>
<rect x="5.2" y="5.1" width="8" height="8.2" fill="none" stroke="#eeff80" stroke-width="0.9"/>
<rect x="7.2" y="7.1" width="4" height="4.2" fill="none" stroke="#eeff80" stroke-width="0.9"/>
<circle cx="9.6" cy="9" r="0.8" fill="#f4ff8c"/></svg>
<div class="lbl" style="left:137.6px;top:611.4px;letter-spacing:-0.27px">Views</div>
</div>
</div>
<div id="vline"></div>
<div id="tabs">
<div class="t" style="left:9.3px;top:8px;font-size:14px;line-height:16px;color:#222;font-weight:normal;letter-spacing:-0.363px;">Dashboard</div>
<div class="t" style="left:93.7px;top:8px;font-size:14px;line-height:16px;color:#222;font-weight:normal;letter-spacing:-0.112px;">Properties</div>
<div class="t" style="left:174.9px;top:8px;font-size:14px;line-height:16px;color:#222;font-weight:normal;letter-spacing:-1.208px;">SQL</div>
<div class="t" style="left:218.9px;top:8px;font-size:14px;line-height:16px;color:#222;font-weight:normal;letter-spacing:0.154px;">Statistics</div>
<div class="t" style="left:295.0px;top:8px;font-size:14px;line-height:16px;color:#222;font-weight:normal;letter-spacing:-0.374px;">Dependencies</div>
<div class="t" style="left:399.7px;top:8px;font-size:14px;line-height:16px;color:#222;font-weight:normal;letter-spacing:-0.446px;">Dependents</div>
<div class="t" style="left:507.7px;top:8px;font-size:14px;line-height:16px;color:#2d6594;font-weight:normal;letter-spacing:-0.514px;">Debugger</div>
<svg style="left:0;top:0" width="826" height="32" viewBox="254 38 826 32">
<g fill="#245f94" stroke="#245f94">
<path d="M749.6,50.2 C749.6,48.4 750.4,47.4 751.6,47.4 C752.8,47.4 753.6,48.4 753.6,50.2 Z" stroke="none"/>
<path d="M747.9,51 H755.3 V55.6 C755.3,57.8 753.8,59.2 751.6,59.2 C749.4,59.2 747.9,57.8 747.9,55.6 Z" stroke="none"/>
<path d="M748.4,51.4 L746,49 M754.8,51.4 L757.2,49 M748.2,54.4 H745.4 M755,54.4 H757.8 M748.6,57.2 L746,59.4 M754.6,57.2 L757.2,59.4" fill="none" stroke-width="1.1"/>
</g><path d="M751.6,51.6 V58.6" stroke="#cfe0ee" stroke-width="0.7"/>
</svg>
<div style="position:absolute;left:481px;top:27.5px;width:94px;height:2.6px;background:#2a5f8e"></div>
<svg style="left:0;top:0" width="826" height="32" viewBox="254 38 826 32"><path d="M1062.9,50.5 L1070.3,58 M1070.3,50.5 L1062.9,58" stroke="#222" stroke-width="2.8" stroke-linecap="butt"/></svg>
</div>
<div id="toolbar">
<div class="tbtn" style="left:4.2px;width:29.4px;border-radius:4px 0 0 4px"></div>
<div class="tbtn" style="left:32.8px;width:29.6px;border-radius:0"></div>
<div class="tbtn" style="left:61.6px;width:29px;top:0.9px;height:28px;border-radius:0 4px 4px 0;background:#fff;border-color:#c9ccd2;box-shadow:0.5px 0.5px 1px rgba(0,0,0,0.18)"></div>
<div style="position:absolute;left:62.6px;top:0.4px;width:27px;height:0;border-top:1px dotted #b8c4d6"></div>
<div style="position:absolute;left:62.6px;top:28.7px;width:27px;height:0;border-top:1px dotted #9fc0e8"></div>
<div class="tbtn" style="left:94.4px;width:27.6px;border-radius:4px 0 0 4px"></div>
<div class="tbtn" style="left:121px;width:28px;border-radius:0 4px 4px 0"></div>
<div class="tbtn" style="left:153px;width:28.3px;border-radius:4px"></div>
<svg style="left:0;top:0" width="826" height="29.5" viewBox="254 69 826 29.5">
<rect x="265.40000000000003" y="77.2" width="14.4" height="11.2" fill="#fff"/><g stroke="#7e7e7e" stroke-width="1.5"><path d="M265.8,78.3 H279.3 M271.0,81.3 H279.3 M271.0,84.2 H279.3 M265.8,87.2 H279.3"/></g><path d="M266.0,80.6 L268.8,82.8 L266.0,85 Z" fill="#6c7f98"/>
<rect x="294.6" y="77.2" width="14.4" height="11.2" fill="#fff"/><g stroke="#7e7e7e" stroke-width="1.5"><path d="M295,78.3 H308.5 M300.2,81.3 H308.5 M300.2,84.2 H308.5 M295,87.2 H308.5"/></g><path d="M298,80.6 L295.2,82.8 L298,85 Z" fill="#6c7f98"/>
<circle cx="330.2" cy="83.2" r="6" fill="#1b1b1b"/><path d="M328.3,80 L333.6,83.2 L328.3,86.4 Z" fill="#fff"/>
<circle cx="362.1" cy="83.3" r="6" fill="#868686"/>
<circle cx="389.3" cy="83.3" r="5.1" fill="none" stroke="#868686" stroke-width="1.5"/><path d="M385.8,86.8 L392.8,79.8" stroke="#868686" stroke-width="1.5"/>
<circle cx="421.1" cy="83.3" r="6" fill="#868686"/><rect x="418.6" y="80.8" width="5" height="5" rx="0.6" fill="#fafafa"/>
</svg>
</div>
<div id="ftitle"><div class="t" style="left:8.6px;top:7.2px;font-size:14px;line-height:16px;color:#222;font-weight:normal;letter-spacing:-0.461px;">hire_clerk(p_ename</div><div class="t" style="left:128.7px;top:7.2px;font-size:14px;line-height:16px;color:#222;font-weight:normal;letter-spacing:-0.145px;">character</div><div class="t" style="left:189.8px;top:7.2px;font-size:14px;line-height:16px;color:#222;font-weight:normal;letter-spacing:-0.219px;">varying,</div><div class="t" style="left:239.1px;top:7.2px;font-size:14px;line-height:16px;color:#222;font-weight:normal;letter-spacing:-0.401px;">p_deptno</div><div class="t" style="left:298.2px;top:7.2px;font-size:14px;line-height:16px;color:#222;font-weight:normal;letter-spacing:-0.167px;">numeric)</div></div>
<div id="editor"><div id="gutter"></div>
<div class="ln" style="top:4.80px">1</div><div class="cl" style="top:5.80px"></div>
<div class="ln" style="top:25.13px">2</div><div class="cl" style="top:26.13px">    v_empno         <span class="k">NUMBER</span><span class="p">(</span><span class="n">4</span><span class="p">)</span>;</div>
<div class="ln" style="top:45.46px">3</div><div class="cl" style="top:46.46px">    v_ename         VARCHAR2<span class="p">(</span><span class="n">10</span><span class="p">)</span>;</div>
<div class="ln" style="top:65.79px">4</div><div class="cl" style="top:66.79px">    v_job           VARCHAR2<span class="p">(</span><span class="n">9</span><span class="p">)</span>;</div>
<div class="ln" style="top:86.12px">5</div><div class="cl" style="top:87.12px">    v_mgr           <span class="k">NUMBER</span><span class="p">(</span><span class="n">4</span><span class="p">)</span>;</div>
<div class="ln" style="top:106.45px">6</div><div class="cl" style="top:107.45px">    v_hiredate      <span class="b">DATE</span>;</div>
<div class="ln" style="top:126.78px">7</div><div class="cl" style="top:127.78px">    v_sal           <span class="k">NUMBER</span><span class="p">(</span><span class="n">7</span>,<span class="n">2</span><span class="p">)</span>;</div>
<div class="ln" style="top:147.11px">8</div><div class="cl" style="top:148.11px">    v_comm          <span class="k">NUMBER</span><span class="p">(</span><span class="n">7</span>,<span class="n">2</span><span class="p">)</span>;</div>
<div class="ln" style="top:167.44px">9</div><div class="cl" style="top:168.44px">    v_deptno        <span class="k">NUMBER</span><span class="p">(</span><span class="n">2</span><span class="p">)</span>;</div>
<div class="ln" style="top:187.77px">10</div><div class="cl" style="top:188.77px"><span class="k">BEGIN</span></div>
<div class="ln" style="top:208.10px">11</div><div class="cl" style="top:209.10px">    v_empno := new_empno;</div>
<div class="ln" style="top:228.43px">12</div><div class="cl" style="top:229.43px">    <span class="k">INSERT</span> <span class="k">INTO</span> emp <span class="k">VALUES</span> <span class="p">(</span>v_empno, p_ename, <span class="s">'CLERK'</span>, <span class="n">7782</span>,</div>
<div class="ln" style="top:248.76px">13</div><div class="cl" style="top:249.76px">        TRUNC<span class="p">(</span>SYSDATE<span class="p">)</span>, <span class="n">950.00</span>, <span class="b">NULL</span>, p_deptno<span class="p">)</span>;</div>
<div class="ln" style="top:269.09px">14</div><div class="cl" style="top:270.09px">    <span class="k">SELECT</span> empno, ename, job, mgr, hiredate, sal, comm, deptno <span class="k">INTO</span></div>
</div>
<div id="btabs">
<div class="t" style="left:9.0px;top:6.5px;font-size:14px;line-height:16px;color:#222;font-weight:normal;letter-spacing:-0.207px;">Parameters</div>
<div class="t" style="left:97.7px;top:6.5px;font-size:14px;line-height:16px;color:#222;font-weight:normal;letter-spacing:-0.142px;">Local variables</div>
<div class="t" style="left:207.7px;top:6.5px;font-size:14px;line-height:16px;color:#2d6594;font-weight:normal;letter-spacing:-0.23px;">Messages</div>
<div class="t" style="left:289.1px;top:6.5px;font-size:14px;line-height:16px;color:#222;font-weight:normal;letter-spacing:-0.331px;">Results</div>
<div class="t" style="left:352.5px;top:6.5px;font-size:14px;line-height:16px;color:#222;font-weight:normal;letter-spacing:-0.204px;">Stack</div>
<div style="position:absolute;left:198.2px;top:26.5px;width:81.6px;height:2.8px;background:#2a5f8e"></div>
</div>
<div id="msgs">
<div class="ml" style="top:6.70px">Inserting employee 8001</div>
<div class="ml" style="top:25.45px">..New salary: 950.00</div>
<div class="ml" style="top:44.20px">User enterprisedb added employee(s) on 2019-04-01</div>
<div class="ml" style="top:62.95px">Department :</div>
<div class="ml" style="top:81.70px">Employee No: 8001</div>
<div class="ml" style="top:100.45px">Name       :</div>
<div class="ml" style="top:119.20px">Job        : CLERK</div>
<div class="ml" style="top:137.95px">Manager    : 7782</div>
<div class="ml" style="top:156.70px">Hire Date  : 2019-04-01 00:00:00</div>
<div class="ml" style="top:175.45px">Salary     : 950.00</div>
<div class="ml" style="top:194.20px">Commission :</div>
</div>
<!-- tree v scrollbar -->
<div style="position:absolute;left:242px;top:70px;width:11px;height:595px;background:#ececec"></div>
<div style="position:absolute;left:242px;top:187px;width:10.3px;height:401.6px;border:1px solid #a9a9a9;border-radius:2px;background:linear-gradient(90deg,#f4f4f4 0%,#e2e2e2 45%,#c6c6c6 100%)"></div>
<svg style="left:242px;top:70px" width="11" height="600" viewBox="242 70 11 600">
<path d="M245.2,77.1 L247.6,74.2 L250,77.1 Z" fill="#3c3c3c"/><path d="M245.2,657.6 L247.6,660.4 L250,657.6 Z" fill="#3c3c3c"/>
<path d="M245.2,386 H249.6 M245.2,388 H249.6 M245.2,390 H249.6" stroke="#8c8c8c" stroke-width="0.9"/></svg>
<!-- tree h scrollbar -->
<div style="position:absolute;left:1px;top:665px;width:252px;height:9px;background:#ececec"></div>
<div style="position:absolute;left:17px;top:665.4px;width:73px;height:8.6px;border:1px solid #a9a9a9;border-radius:2px;background:linear-gradient(180deg,#f4f4f4 0%,#e2e2e2 45%,#c6c6c6 100%)"></div>
<svg style="left:0;top:665px" width="253" height="9" viewBox="0 665 253 9">
<path d="M6,667.2 L3.2,669.6 L6,672 Z" fill="#444"/><path d="M235,667.2 L237.8,669.6 L235,672 Z" fill="#444"/>
<path d="M51.6,667.6 V671.8 M53.4,667.6 V671.8 M55.2,667.6 V671.8" stroke="#555" stroke-width="0.9"/></svg>
<!-- editor v scrollbar -->
<div style="position:absolute;left:1072px;top:130px;width:7px;height:274.5px;background:#ececec"></div>
<div style="position:absolute;left:1071.6px;top:141.4px;width:7.2px;height:90.6px;border:1px solid #a9a9a9;border-radius:2px;background:linear-gradient(90deg,#f4f4f4 0%,#e0e0e0 45%,#c8c8c8 100%)"></div>
<svg style="left:1070px;top:130px" width="10" height="275" viewBox="1070 130 10 275">
<path d="M1073.2,137.6 L1075.4,134.8 L1077.6,137.6 Z" fill="#444"/><path d="M1073.2,398 L1075.4,400.8 L1077.6,398 Z" fill="#444"/>
<path d="M1073.6,184.4 H1077.2 M1073.6,186.2 H1077.2 M1073.6,188 H1077.2" stroke="#8c8c8c" stroke-width="0.9"/></svg>
<!-- I-beam cursor -->
<svg style="left:1066px;top:158px" width="10" height="16" viewBox="1066 158 10 16"><path d="M1068.4,161 C1069.6,161 1070.4,161.4 1070.5,162 C1070.6,161.4 1071.4,161 1072.6,161 M1070.5,162 V170.8 M1068.4,171.8 C1069.6,171.8 1070.4,171.4 1070.5,170.8 C1070.6,171.4 1071.4,171.8 1072.6,171.8" fill="none" stroke="#444" stroke-width="1.1"/></svg>
<!-- window frame -->
<div style="position:absolute;left:1079px;top:38px;width:1px;height:636px;background:#9c9c9c"></div>
<div style="position:absolute;left:1079px;top:0;width:1px;height:38px;background:#2a4f70"></div>
<div style="position:absolute;left:0;top:673px;width:1080px;height:1px;background:#a6a6a6"></div>
<div style="position:absolute;left:0;top:0;width:1080px;height:1px;background:rgba(30,30,60,0.22)"></div>
</body>
</html>
